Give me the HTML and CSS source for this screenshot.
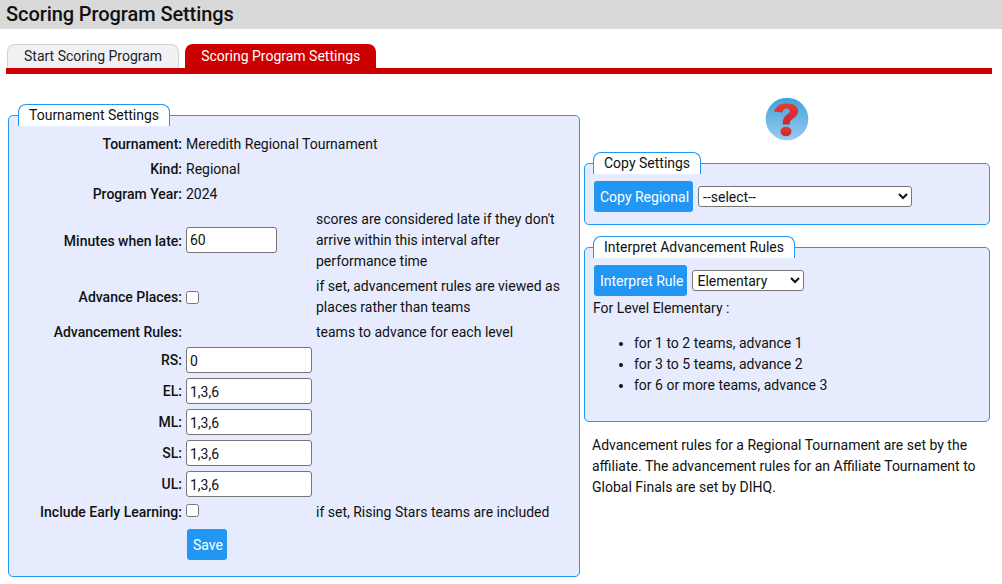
FILE: index.html
```html
<!DOCTYPE html>
<html lang="en">
<head>
<meta charset="utf-8">
<title>Scoring Program Settings</title>
<link rel="stylesheet" href="styles.css">
</head>
<body>
<h1 class="title">Scoring Program Settings</h1>
<nav class="tabs">
  <a class="tab">Start Scoring Program</a>
  <a class="tab active">Scoring Program Settings</a>
</nav>
<main class="columns">
  <div class="left">
    <fieldset class="box">
      <legend>Tournament Settings</legend>
      <table class="form">
        <tr class="plain"><th>Tournament:</th><td colspan="2">Meredith Regional Tournament</td></tr>
        <tr class="plain"><th>Kind:</th><td colspan="2">Regional</td></tr>
        <tr class="plain"><th>Program Year:</th><td colspan="2">2024</td></tr>
        <tr class="late"><th>Minutes when late:</th><td><input class="short" type="text" value="60"></td><td class="note">scores are considered late if they don't arrive within this interval after performance time</td></tr>
        <tr class="adv"><th>Advance Places:</th><td><input type="checkbox"></td><td class="note">if set, advancement rules are viewed as places rather than teams</td></tr>
        <tr class="plain"><th>Advancement Rules:</th><td></td><td class="note">teams to advance for each level</td></tr>
        <tr class="rule"><th>RS:</th><td><input class="long" type="text" value="0"></td><td></td></tr>
        <tr class="rule"><th>EL:</th><td><input class="long" type="text" value="1,3,6"></td><td></td></tr>
        <tr class="rule"><th>ML:</th><td><input class="long" type="text" value="1,3,6"></td><td></td></tr>
        <tr class="rule"><th>SL:</th><td><input class="long" type="text" value="1,3,6"></td><td></td></tr>
        <tr class="rule"><th>UL:</th><td><input class="long" type="text" value="1,3,6"></td><td></td></tr>
        <tr class="early"><th>Include Early Learning:</th><td><input type="checkbox"></td><td class="note">if set, Rising Stars teams are included</td></tr>
        <tr class="save"><th></th><td colspan="2"><button class="btn" type="button">Save</button></td></tr>
      </table>
    </fieldset>
  </div>
  <div class="right">
    <div class="help">
      <svg width="44" height="44" viewBox="0 0 44 44" aria-label="Help">
        <defs>
          <linearGradient id="ball" x1="0" y1="0" x2="0" y2="1"><stop offset="0" stop-color="#3ea3da"/><stop offset="1" stop-color="#9ccaee"/></linearGradient>
          <linearGradient id="mark" x1="0" y1="0" x2="0" y2="1"><stop offset="0" stop-color="#ea3a2c"/><stop offset="1" stop-color="#c8243c"/></linearGradient>
        </defs>
        <circle cx="22" cy="22" r="21.300" fill="url(#ball)"/>
        <path d="M9 14.500C11 9 15.500 6.500 22 6.500c6.500 0 11 2.500 11 7.500 0 4-2.500 6-5.500 8-2 1.300-2.700 2.500-2.700 5.500h-7c-.5-4.500.8-7 3.500-9.500 2-1.800 3.500-2.500 3.500-4 0-1.800-1.500-2.500-3-2.500-2.500 0-3.800 1.500-4.500 4z" fill="url(#mark)"/>
        <ellipse cx="21" cy="34.500" rx="5.500" ry="4.800" fill="url(#mark)"/>
      </svg>
    </div>
    <fieldset class="box copy">
      <legend>Copy Settings</legend>
      <div class="action">
        <button class="btn" type="button">Copy Regional</button>
        <select class="sel-wide"><option>--select--</option></select>
      </div>
    </fieldset>
    <fieldset class="box interpret">
      <legend>Interpret Advancement Rules</legend>
      <div class="action">
        <button class="btn" type="button">Interpret Rule</button>
        <select class="sel-level"><option>Elementary</option></select>
      </div>
      <p class="for">For Level Elementary :</p>
      <ul class="list">
        <li>for 1 to 2 teams, advance 1</li>
        <li>for 3 to 5 teams, advance 2</li>
        <li>for 6 or more teams, advance 3</li>
      </ul>
    </fieldset>
    <p class="foot">Advancement rules for a Regional Tournament are set by the affiliate. The advancement rules for an Affiliate Tournament to Global Finals are set by DIHQ.</p>
  </div>
</main>
</body>
</html>
```
FILE: styles.css
```css
* { box-sizing: border-box; }
html, body { margin: 0; padding: 0; }
body { font-family: Roboto, "Liberation Sans", sans-serif; font-size: 14px; line-height: 21px; color: #111; background: #fff; overflow: hidden; }
.title { margin: 0; height: 29px; padding-left: 6px; background: #d9d9d9; font-size: 20px; line-height: 28px; font-weight: 500; letter-spacing: -0.08px; color: #111; }
.tabs { display: flex; gap: 6px; margin: 15px 10px 0 6px; height: 30px; border-bottom: 6px solid #cc0000; padding-left: 1px; }
.tab { height: 24px; padding: 0 16px; line-height: 23px; border: 1px solid #d3d3d3; border-bottom: 0; border-radius: 8px 8px 0 0; background: #f1f1f5; color: #222; }
.tab.active { padding-top: 1px; background: #cc0000; border: 0; color: #fff; }
.columns { display: flex; margin-top: 20px; padding-left: 8px; }
.left { width: 572px; flex: none; padding-top: 10px; }
.right { width: 406px; flex: none; margin-left: 4px; }
.box { margin: 0; padding: 0 9px; min-width: 0; background: #e6ecfd; border: 1px solid #2196f3; border-radius: 5px; }
.box legend { padding: 0 10px; height: 22px; line-height: 21px; background: #fff; border: 1px solid #2196f3; border-bottom: 0; border-radius: 8px 8px 0 0; color: #111; }
.right .box legend { margin-left: -1px; }
.form { border-collapse: collapse; border-spacing: 0; margin: 6px 0 0 4px; }
.form th { width: 164px; padding: 0 4px 0 0; text-align: right; font-weight: 500; white-space: nowrap; }
.form td { padding: 0; }
.form td:nth-child(2) { width: 130px; }
.plain { height: 25px; }
.late { height: 67px; }
.form .late th { padding-top: 2px; }
.form .late td:nth-child(2) { padding-bottom: 2px; }
.adv { height: 46px; }
.rule { height: 31px; }
.form .rule td:nth-child(2) { padding-bottom: 1px; }
.early { height: 26px; }
.form .early th, .form .early .note { padding-bottom: 2px; }
.form .early td:nth-child(2) { vertical-align: top; padding-top: 4px; }
.save { height: 50px; }
.form .save td { vertical-align: top; padding-top: 3px; }
.note { width: 250px; }
input[type="text"] { display: block; height: 26px; padding: 2px 3px 1px; font: 14px Roboto, sans-serif; color: #111; background: #fff; border: 1px solid #767676; border-radius: 3px; }
.short { width: 91px; }
.long { width: 126px; }
input[type="checkbox"] { display: block; width: 13px; height: 13px; margin: 0; }
.btn { height: 31px; padding: 0 4px 0 6px; border: 0; border-radius: 3px; background: #2196f3; color: #fff; font: 400 14px Roboto, sans-serif; }
.save .btn { margin-left: 1px; }
.help { display: flex; justify-content: center; height: 48px; margin-top: 3px; margin-bottom: 7px; }
.action { display: flex; align-items: center; gap: 5px; padding-top: 7px; }
.copy { padding-bottom: 12px; }
.interpret { margin-top: 11px; padding-bottom: 25px; }
select { height: 21px; padding: 0; font: 14px Roboto, sans-serif; color: #111; background: #fff; border: 1px solid #767676; border-radius: 3px; }
.sel-wide { width: 214px; }
.sel-level { width: 112px; }
.for { margin: 0 0 0 -1px; line-height: 25px; }
.list { margin: 12px 0 0; padding-left: 40px; }
.foot { margin: 13px 8px 0 8px; }
```
